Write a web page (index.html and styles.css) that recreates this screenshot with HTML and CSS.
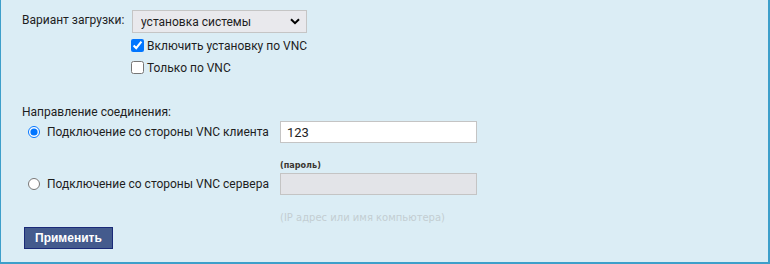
FILE: index.html
```html
<!DOCTYPE html>
<html lang="ru">
<head>
    <meta charset="UTF-8">
    <title>Установка по VNC</title>
    <link rel="stylesheet" href="styles.css">
</head>
<body>
    <div class="panel">
        <form class="vnc-form">
            <div class="boot-row">
                <span class="boot-label">Вариант загрузки:</span>
                <div class="boot-options">
                    <div class="select-wrap">
                        <select class="boot-select">
                            <option>установка системы</option>
                        </select>
                        <svg class="chevron" width="10" height="7" viewBox="0 0 10 7"><path d="M1 1.2 L5 5.2 L9 1.2" fill="none" stroke="#000" stroke-width="2"/></svg>
                    </div>
                    <label class="check"><input type="checkbox" checked> Включить установку по VNC</label>
                    <label class="check"><input type="checkbox"> Только по VNC</label>
                </div>
            </div>

            <div class="direction">
                <div class="direction-title">Направление соединения:</div>
                <div class="direction-grid">
                    <label class="radio"><input type="radio" name="dir" checked> Подключение со стороны VNC клиента</label>
                    <div class="field">
                        <input type="text" class="text-input" value="123">
                        <span class="hint">(пароль)</span>
                    </div>
                    <label class="radio"><input type="radio" name="dir"> Подключение со стороны VNC сервера</label>
                    <div class="field">
                        <input type="text" class="text-input" disabled>
                        <span class="hint muted">(IP адрес или имя компьютера)</span>
                    </div>
                </div>
            </div>

            <button type="button" class="apply">Применить</button>
        </form>
    </div>
</body>
</html>
```

FILE: styles.css
```css
html, body {
    margin: 0;
    height: 100%;
}
body {
    font-family: Roboto, "Liberation Sans", sans-serif;
    font-size: 12px;
    line-height: 14px;
    color: #1e1e1e;
}
.panel {
    box-sizing: border-box;
    height: 264px;
    background-color: #dbedf5;
    border-left: 1px solid #3d9fca;
    border-right: 2px solid #3d9fca;
    border-bottom: 2px solid #3d9fca;
    padding: 10px 0 0 21px;
}
.boot-row {
    display: flex;
}
.boot-label {
    width: 110px;
    padding-top: 3px;
}
.boot-options {
    display: flex;
    flex-direction: column;
}
.select-wrap {
    position: relative;
    width: 175px;
    height: 23px;
    margin-bottom: 6px;
}
.boot-select {
    appearance: none;
    box-sizing: border-box;
    width: 100%;
    height: 100%;
    margin: 0;
    padding: 0 0 0 8px;
    background-color: #e9e9ed;
    border: 1px solid #c5c5c5;
    border-radius: 0;
    font-family: inherit;
    font-size: 12px;
    color: #1e1e1e;
}
.chevron {
    position: absolute;
    right: 7px;
    top: 8px;
    pointer-events: none;
}
.check {
    display: flex;
    align-items: center;
    height: 13px;
    margin: 0 0 9px -1px;
    white-space: nowrap;
}
.check input {
    width: 13px;
    height: 13px;
    margin: 0 3px 0 0;
}
.direction {
    margin-top: 22px;
}
.direction-title {
    margin-bottom: 2px;
}
.direction-grid {
    display: grid;
    grid-template-columns: 258px 197px;
    row-gap: 3px;
    align-items: start;
}
.radio {
    display: flex;
    align-items: center;
    height: 21px;
    margin-left: 5px;
    white-space: nowrap;
}
.radio input {
    width: 12px;
    height: 12px;
    margin: 0 7px 0 1px;
}
.field {
    display: flex;
    flex-direction: column;
}
.text-input {
    box-sizing: border-box;
    width: 197px;
    height: 22px;
    margin: 0;
    padding: 0 6px;
    border: 1px solid #c4c4c4;
    background-color: #fff;
    font-family: inherit;
    font-size: 13px;
    color: #1e1e1e;
}
.text-input:disabled {
    background-color: #e3e4e8;
}
.hint {
    margin-top: 18px;
    font-family: "DejaVu Sans Condensed", "DejaVu Sans", sans-serif;
    font-size: 9px;
    line-height: 9px;
    font-weight: bold;
    color: #3a3530;
}
.muted {
    margin-top: 17px;
    font-family: "DejaVu Sans", sans-serif;
    font-size: 10px;
    line-height: 12px;
    font-weight: normal;
    color: #c3cdd2;
}
.apply {
    display: block;
    margin: 3px 0 0 2px;
    height: 22px;
    padding: 0 10px;
    background-color: #445b8d;
    border: 1px solid #1a2a78;
    color: #fff;
    font-family: "Liberation Sans", Arial, sans-serif;
    font-size: 12px;
    font-weight: bold;
    cursor: pointer;
}
```
